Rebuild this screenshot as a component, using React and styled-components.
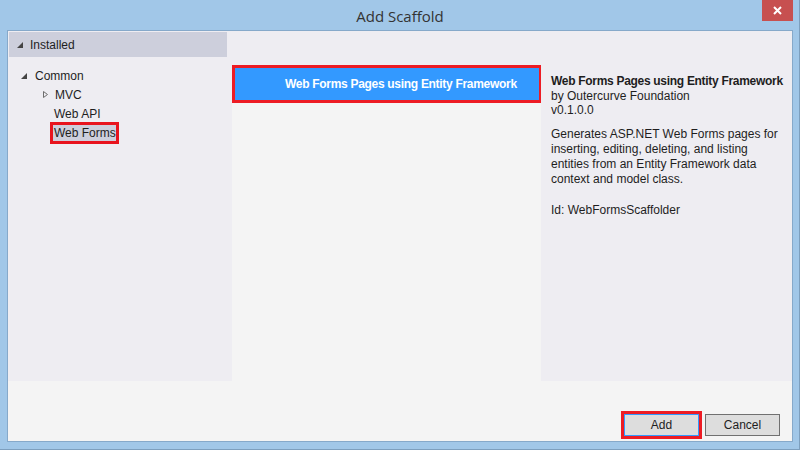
import React from "react";
import styled, { createGlobalStyle } from "styled-components";

const GlobalStyle = createGlobalStyle`
  html, body {
    margin: 0;
    padding: 0;
    background: #a1c7e8;
  }
  body {
    font-family: "Liberation Sans", Arial, sans-serif;
    font-size: 12px;
    color: #1e1e1e;
  }
`;

const Window = styled.div`
  width: 800px;
  height: 450px;
  box-sizing: border-box;
  background: #a1c7e8;
  border-right: 1px solid #7d9fbe;
  border-bottom: 1px solid #7d9fbe;
  display: flex;
  flex-direction: column;
  padding: 0 6px 7px 7px;
`;

const TitleBar = styled.div`
  height: 30px;
  display: grid;
  grid-template-columns: 1fr auto 1fr;
  align-items: start;
`;

const Title = styled.div`
  grid-column: 2;
  font-family: "Open Sans", "Liberation Sans", sans-serif;
  font-size: 15px;
  color: #333;
  line-height: 32px;
`;

const CloseButton = styled.div`
  grid-column: 3;
  justify-self: end;
  width: 31px;
  height: 21px;
  background: #c75050;
  display: flex;
  align-items: center;
  justify-content: center;
`;

const Client = styled.div`
  flex: 1;
  border: 1px solid #86a9ca;
  background: #f4f4f4;
  display: flex;
  flex-direction: column;
  min-height: 0;
`;

const Body = styled.div`
  height: 350px;
  display: grid;
  grid-template-columns: 224px 309px 1fr;
`;

const LeftPane = styled.div`
  background: #eeedf2;
  padding: 1px 5px 0 1px;
`;

const GroupHeader = styled.div`
  height: 25px;
  background: #cdcfdc;
  display: flex;
  align-items: center;
  padding-left: 8px;
  gap: 7px;
`;

const Tree = styled.div`
  padding-top: 9px;
`;

const TreeRow = styled.div`
  height: 19px;
  display: flex;
  align-items: center;
  padding-left: ${(p) => p.indent}px;
`;

const Twisty = styled.span`
  width: ${(p) => p.w}px;
  display: inline-flex;
  align-items: center;
`;

const NodeLabel = styled.span`
  padding: 3px 2px 3px 3px;
  margin-left: -3px;
  ${(p) =>
    p.selected &&
    `
    background: #cdcfdc;
    outline: 3px solid #e8141e;
    outline-offset: -2px;
  `}
`;

const MiddlePane = styled.div`
  background: #eeedf2;
  padding-top: 34px;
  display: flex;
  flex-direction: column;
`;

const List = styled.div`
  flex: 1;
  background: #f4f4f4;
`;

const ListItem = styled.div`
  height: 32px;
  margin-right: -1px;
  background: #3399ff;
  border: 3px solid #ed1c24;
  color: #fff;
  font-weight: bold;
  letter-spacing: -0.3px;
  display: flex;
  align-items: center;
  padding-left: 50px;
`;

const DetailPane = styled.div`
  background: #eeedf2;
  padding: 43px 6px 0 10px;
  line-height: 14.5px;
`;

const DetailTitle = styled.div`
  font-weight: bold;
  letter-spacing: -0.3px;
  white-space: nowrap;
`;

const Para = styled.p`
  margin: 0 0 ${(p) => p.gap}px 0;
  line-height: ${(p) => p.lh || 14.5}px;
`;

const Footer = styled.div`
  flex: 1;
  display: flex;
  justify-content: flex-end;
  align-items: flex-end;
  gap: 3px;
  padding: 0 12px 2px 0;
`;

const Button = styled.button`
  font-family: inherit;
  font-size: 12px;
  color: #1e1e1e;
  width: ${(p) => (p.primary ? 81 : 75)}px;
  height: ${(p) => (p.primary ? 28 : 22)}px;
  margin-bottom: ${(p) => (p.primary ? 0 : 3)}px;
  background: #dddddd;
  border: 1px solid #707070;
  box-sizing: border-box;
  ${(p) =>
    p.primary &&
    `
    border: 3px solid #ed1c24;
    box-shadow: inset 0 0 0 1px #3399ff;
  `}
`;

function Triangle({ hollow }) {
  if (hollow) {
    return (
      <svg width="5" height="7" viewBox="0 0 5 7">
        <path d="M0.5 0.5 L4.5 3.5 L0.5 6.5 Z" fill="none" stroke="#6d6d6d" />
      </svg>
    );
  }
  return (
    <svg width="6" height="6" viewBox="0 0 6 6">
      <path d="M6 0 L6 6 L0 6 Z" fill="#444" />
    </svg>
  );
}

export default function App() {
  return (
    <>
      <GlobalStyle />
      <Window>
        <TitleBar>
          <Title>Add Scaffold</Title>
          <CloseButton>
            <svg width="9" height="9" viewBox="0 0 9 9">
              <path d="M1 1 L8 8 M8 1 L1 8" stroke="#fff" strokeWidth="2" />
            </svg>
          </CloseButton>
        </TitleBar>
        <Client>
          <Body>
            <LeftPane>
              <GroupHeader>
                <Triangle />
                <span>Installed</span>
              </GroupHeader>
              <Tree>
                <TreeRow indent={12}>
                  <Twisty w={14}>
                    <Triangle />
                  </Twisty>
                  <NodeLabel>Common</NodeLabel>
                </TreeRow>
                <TreeRow indent={34}>
                  <Twisty w={12}>
                    <Triangle hollow />
                  </Twisty>
                  <NodeLabel>MVC</NodeLabel>
                </TreeRow>
                <TreeRow indent={45}>
                  <NodeLabel>Web API</NodeLabel>
                </TreeRow>
                <TreeRow indent={45}>
                  <NodeLabel selected>Web Forms</NodeLabel>
                </TreeRow>
              </Tree>
            </LeftPane>
            <MiddlePane>
              <List>
                <ListItem>Web Forms Pages using Entity Framework</ListItem>
              </List>
            </MiddlePane>
            <DetailPane>
              <DetailTitle>Web Forms Pages using Entity Framework</DetailTitle>
              <div>by Outercurve Foundation</div>
              <Para gap={9}>v0.1.0.0</Para>
              <Para gap={16} lh={15}>
                Generates ASP.NET Web Forms pages for inserting, editing,
                deleting, and listing entities from an Entity Framework data
                context and model class.
              </Para>
              <div>Id: WebFormsScaffolder</div>
            </DetailPane>
          </Body>
          <Footer>
            <Button primary>Add</Button>
            <Button>Cancel</Button>
          </Footer>
        </Client>
      </Window>
    </>
  );
}
